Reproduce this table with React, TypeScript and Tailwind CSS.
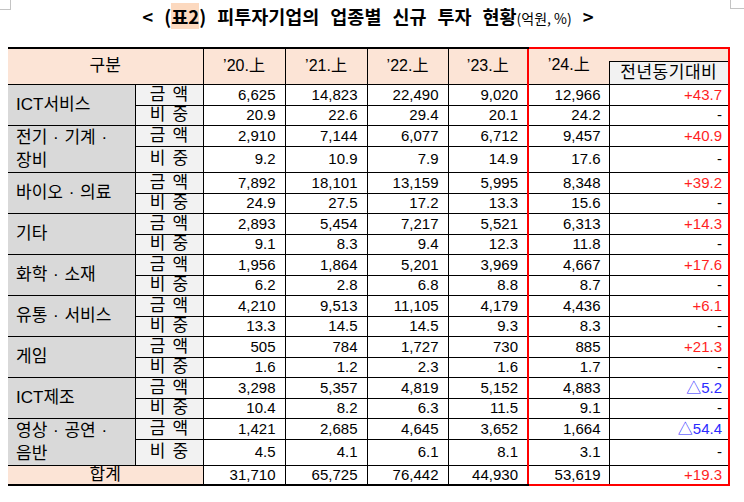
import React from "react";

type Row = {
  label: React.ReactNode;
  amount: string[];
  share: string[];
  change: string;
  tall?: boolean;
};

const rows: Row[] = [
  { label: "ICT서비스", amount: ["6,625", "14,823", "22,490", "9,020", "12,966"], share: ["20.9", "22.6", "29.4", "20.1", "24.2"], change: "+43.7" },
  { label: <>전기 · 기계 ·<br />장비</>, amount: ["2,910", "7,144", "6,077", "6,712", "9,457"], share: ["9.2", "10.9", "7.9", "14.9", "17.6"], change: "+40.9", tall: true },
  { label: "바이오 · 의료", amount: ["7,892", "18,101", "13,159", "5,995", "8,348"], share: ["24.9", "27.5", "17.2", "13.3", "15.6"], change: "+39.2" },
  { label: "기타", amount: ["2,893", "5,454", "7,217", "5,521", "6,313"], share: ["9.1", "8.3", "9.4", "12.3", "11.8"], change: "+14.3" },
  { label: "화학 · 소재", amount: ["1,956", "1,864", "5,201", "3,969", "4,667"], share: ["6.2", "2.8", "6.8", "8.8", "8.7"], change: "+17.6" },
  { label: "유통 · 서비스", amount: ["4,210", "9,513", "11,105", "4,179", "4,436"], share: ["13.3", "14.5", "14.5", "9.3", "8.3"], change: "+6.1" },
  { label: "게임", amount: ["505", "784", "1,727", "730", "885"], share: ["1.6", "1.2", "2.3", "1.6", "1.7"], change: "+21.3" },
  { label: "ICT제조", amount: ["3,298", "5,357", "4,819", "5,152", "4,883"], share: ["10.4", "8.2", "6.3", "11.5", "9.1"], change: "△5.2" },
  { label: <>영상 · 공연 ·<br />음반</>, amount: ["1,421", "2,685", "4,645", "3,652", "1,664"], share: ["4.5", "4.1", "6.1", "8.1", "3.1"], change: "△54.4", tall: true },
];

const years = ["’20.上", "’21.上", "’22.上", "’23.上"];

function Sub({ a, b }: { a: string; b: string }) {
  return (
    <div className="flex justify-center gap-[7px] text-[17px]">
      <span>{a}</span>
      <span>{b}</span>
    </div>
  );
}

function NumCells({ values }: { values: string[] }) {
  return (
    <>
      {values.slice(0, 4).map((v, i) => (
        <td key={i} className="border border-black text-right pr-[9px] text-[15px]">
          {v}
        </td>
      ))}
      <td className="border border-black border-l-2 border-l-[#ff0000] text-right pr-[8px] text-[15px]">
        {values[4]}
      </td>
    </>
  );
}

function Change({ v, last }: { v: string; last?: boolean }) {
  const color = v.startsWith("△") ? "text-[#2b2bff]" : v.startsWith("+") ? "text-[#ff1f1f]" : "text-black";
  return (
    <td
      className={`border border-black border-r-2 border-r-[#ff0000] text-right pr-[6px] text-[15px] ${color} ${
        last ? "border-b-2 border-b-[#ff0000]" : ""
      }`}
    >
      {v}
    </td>
  );
}

export default function App() {
  return (
    <div
      className="relative w-[744px] h-[502px] bg-white text-black overflow-hidden"
      style={{ fontFamily: '"Liberation Sans", "Noto Sans CJK KR", sans-serif' }}
    >
      {/* page corner marks */}
      <div className="absolute left-0 top-0 w-[11px] h-[10px] border-r border-b border-[#c4c4c4]" />
      <div className="absolute left-[730px] top-0 w-[14px] h-[9px] border-l border-b border-[#c4c4c4]" />

      <div className="h-[47px] pt-[4px] flex justify-center">
        <h1
          className="flex items-baseline gap-[11px] text-[18.5px] font-bold leading-[24px] pr-[8px]"
          style={{ fontFamily: '"Noto Sans CJK KR", sans-serif' }}
        >
          <span>&lt;</span>
          <span>
            (<span className="bg-[#fcd9bf]">표2</span>)
          </span>
          <span>피투자기업의</span>
          <span>업종별</span>
          <span>신규</span>
          <span>투자</span>
          <span>
            현황<span className="text-[14px] font-normal">(억원, %)</span>
          </span>
          <span>&gt;</span>
        </h1>
      </div>

      <div className="pl-[8px]">
        <table className="border-collapse table-fixed w-[721px] text-[16px] leading-[18px]">
          <colgroup>
            <col className="w-[127px]" />
            <col className="w-[68px]" />
            <col className="w-[82px]" />
            <col className="w-[82px]" />
            <col className="w-[81px]" />
            <col className="w-[80px]" />
            <col className="w-[81px]" />
            <col className="w-[120px]" />
          </colgroup>
          <thead>
            <tr className="h-[13px]">
              <th rowSpan={2} colSpan={2} className="bg-[#fce4d6] font-normal text-[17px] border-t-2 border-t-black border-b border-b-black border-r border-r-black">
                구분
              </th>
              {years.map((y) => (
                <th key={y} rowSpan={2} className="bg-[#fce4d6] font-normal border-t-2 border-t-black border-b border-b-black border-r border-r-black">
                  {y}
                </th>
              ))}
              <th rowSpan={2} className="bg-[#fce4d6] font-normal border-t-2 border-t-[#ff0000] border-l-2 border-l-[#ff0000] border-b border-b-black align-top pt-[7px]">
                ’24.上
              </th>
              <th className="bg-[#fce4d6] border-t-2 border-t-[#ff0000] border-r-2 border-r-[#ff0000]" />
            </tr>
            <tr className="h-[23px]">
              <th className="bg-[#f2f2f2] font-normal text-[17px] border border-black border-r-2 border-r-[#ff0000] tracking-[0.5px]">
                전년동기대비
              </th>
            </tr>
          </thead>
          <tbody>
            {rows.map((r, i) => (
              <React.Fragment key={i}>
                <tr className="h-[21px]">
                  <td
                    rowSpan={2}
                    className={`bg-[#d9d9d9] border border-black border-l-0 pl-[8px] text-left text-[17px] [word-spacing:1px] ${
                      r.tall ? "leading-[23px]" : ""
                    }`}
                  >
                    {r.label}
                  </td>
                  <td className="bg-[#f2f2f2] border border-black">
                    <Sub a="금" b="액" />
                  </td>
                  <NumCells values={r.amount} />
                  <Change v={r.change} />
                </tr>
                <tr className={r.tall ? "h-[25px]" : "h-[20px]"}>
                  <td className="bg-[#f2f2f2] border border-black">
                    <Sub a="비" b="중" />
                  </td>
                  <NumCells values={r.share} />
                  <Change v="-" />
                </tr>
              </React.Fragment>
            ))}
            <tr className="h-[20px]">
              <td colSpan={2} className="bg-[#fce4d6] border border-black border-l-0 border-b-2 text-center text-[17px]">
                합계
              </td>
              {["31,710", "65,725", "76,442", "44,930"].map((v) => (
                <td key={v} className="border border-black border-b-2 text-right pr-[9px] text-[15px]">
                  {v}
                </td>
              ))}
              <td className="border border-black border-l-2 border-l-[#ff0000] border-b-2 border-b-[#ff0000] text-right pr-[8px] text-[15px]">
                53,619
              </td>
              <Change v="+19.3" last />
            </tr>
          </tbody>
        </table>
      </div>
    </div>
  );
}
